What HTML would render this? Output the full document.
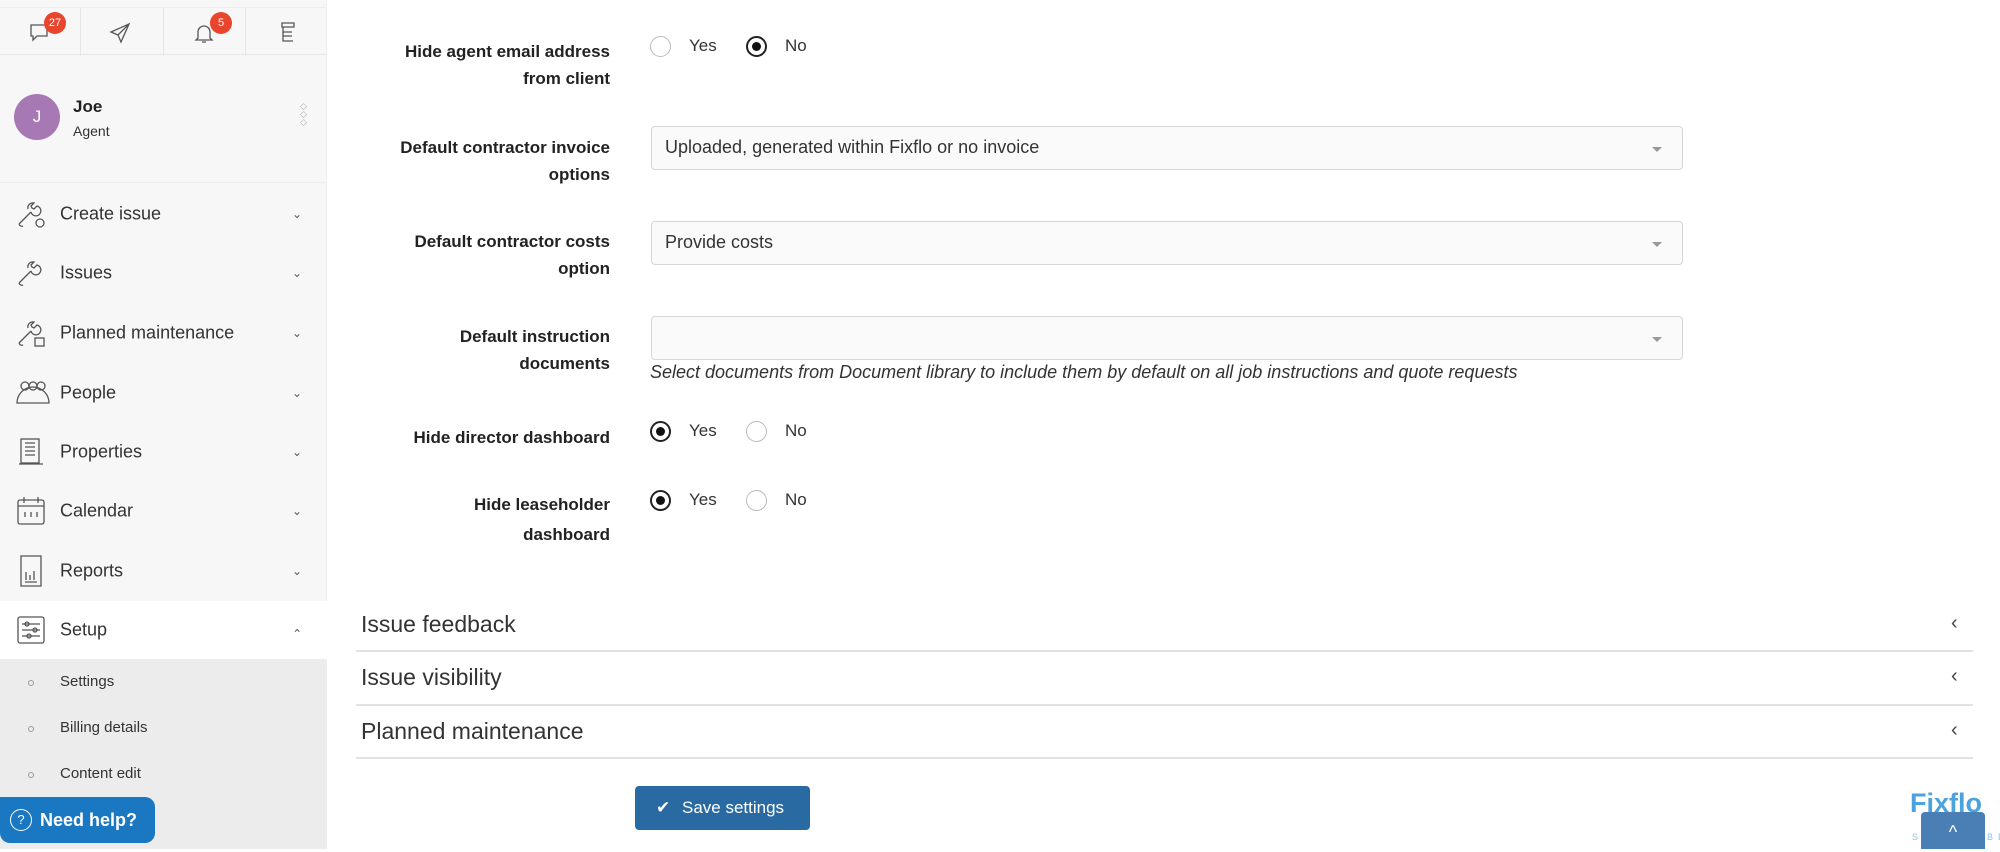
<!DOCTYPE html>
<html><head><meta charset="utf-8"><style>
*{box-sizing:border-box;margin:0;padding:0}
body{width:2000px;height:849px;overflow:hidden;background:#fff;font-family:"Liberation Sans",sans-serif;color:#222;position:relative}
.sb{position:absolute;left:0;top:0;width:327px;height:849px;background:#f7f7f7;border-right:1px solid #eee}
.topbar{position:absolute;left:0;top:7px;width:327px;height:48px;border-bottom:1px solid #e6e6e6;border-top:1px solid #eee}
.topbar .d{position:absolute;top:0;width:1px;height:48px;background:#e6e6e6}
.badge{position:absolute;background:#e8452c;color:#fff;border-radius:50%;width:22px;height:22px;font-size:11px;text-align:center;line-height:22px}
.av{position:absolute;left:14px;top:94px;width:46px;height:46px;border-radius:50%;background:#a679b5;color:#fff;text-align:center;line-height:46px;font-size:17px}
.mi{position:absolute;left:0;width:327px;height:58px}
.mi .t{position:absolute;left:60px;top:50%;transform:translateY(-50%);font-size:18px;color:#333}
.mi .c{position:absolute;left:292px;top:50%;transform:translateY(-50%);font-size:12px;color:#555}
.mi svg{position:absolute;left:15px;top:50%;transform:translateY(-50%)}
.sub{position:absolute;left:0;width:327px;font-size:15px;color:#333}
.sub span{position:absolute;left:60px}
.sub i{position:absolute;left:28px;top:7px;width:6px;height:6px;border:1px solid #999;border-radius:50%}
.lbl{position:absolute;right:1390px;text-align:right;font-weight:bold;font-size:17px;line-height:27px;color:#222}
.r{position:absolute;width:21px;height:21px;border:1px solid #bbb;border-radius:50%;background:#fff}
.r.on{border:2px solid #222}
.r.on::after{content:"";position:absolute;left:4px;top:4px;width:9px;height:9px;border-radius:50%;background:#111}
.rt{position:absolute;font-size:17px;color:#333}
.sel{position:absolute;left:651px;width:1032px;height:44px;border:1px solid #d6d6d6;border-radius:4px;background:#fafafa;font-size:18px;color:#333;padding:10px 13px}
.sel::after{content:"";position:absolute;right:20px;top:20px;border-left:5px solid transparent;border-right:5px solid transparent;border-top:5px solid #999}
.acc{position:absolute;left:361px;font-size:23px;color:#333}
.hl{position:absolute;left:356px;width:1617px;height:2px;background:#e2e2e2}
.chev{position:absolute;left:1951px;font-size:20px;color:#444}
</style></head><body>
<div class="sb">
 <div class="topbar">
  <div class="d" style="left:80px"></div><div class="d" style="left:163px"></div><div class="d" style="left:245px"></div>
  <svg style="position:absolute;left:28px;top:12px" width="24" height="24" viewBox="0 0 24 24" fill="none" stroke="#555" stroke-width="1.3"><path d="M3 5h16v11H9l-4 4v-4H3z"/></svg>
  <div class="badge" style="left:44px;top:4px">27</div>
  <svg style="position:absolute;left:108px;top:13px" width="24" height="24" viewBox="0 0 24 24" fill="none" stroke="#555" stroke-width="1.3"><path d="M21 3L3 11l7 3 3 7z M10 14l11-11"/></svg>
  <svg style="position:absolute;left:192px;top:13px" width="24" height="24" viewBox="0 0 24 24" fill="none" stroke="#555" stroke-width="1.3"><path d="M6 17V11a6 6 0 0 1 12 0v6l2 2H4z M10 21h4"/></svg>
  <div class="badge" style="left:210px;top:4px">5</div>
  <svg style="position:absolute;left:276px;top:12px" width="24" height="26" viewBox="0 0 24 26" fill="none" stroke="#555" stroke-width="1.3"><path d="M6 3h12v4H6z M7 7v14h10 M7 12h9 M7 16h9"/></svg>
 </div>
 <div class="av">J</div>
 <div style="position:absolute;left:73px;top:97px;font-weight:bold;font-size:17px">Joe</div>
 <div style="position:absolute;left:73px;top:123px;font-size:14px;color:#333">Agent</div>
 <div style="position:absolute;left:300px;top:102px;font-size:9px;color:#aaa;line-height:8px">◇<br>◇<br>◇</div>
 <div style="position:absolute;left:0;top:182px;width:327px;height:1px;background:#eee"></div>

 <div class="mi" style="top:185px"><svg width="32" height="32" viewBox="0 0 32 32" fill="none" stroke="#555" stroke-width="1.3"><path d="M4 26l12-12 M16 14a5 5 0 1 0 6-6l-3 3-2-1-1-2 3-3a5 5 0 0 0-6 6 M4 26a3 3 0 0 0 4 2"/><circle cx="25" cy="25" r="4"/></svg><span class="t">Create issue</span><span class="c">⌄</span></div>
 <div class="mi" style="top:244px"><svg width="32" height="32" viewBox="0 0 32 32" fill="none" stroke="#555" stroke-width="1.3"><path d="M4 26l12-12 M16 14a5 5 0 1 0 6-6l-3 3-2-1-1-2 3-3a5 5 0 0 0-6 6 M4 26a3 3 0 0 0 4 2"/></svg><span class="t">Issues</span><span class="c">⌄</span></div>
 <div class="mi" style="top:304px"><svg width="32" height="32" viewBox="0 0 32 32" fill="none" stroke="#555" stroke-width="1.3"><path d="M4 26l12-12 M16 14a5 5 0 1 0 6-6l-3 3-2-1-1-2 3-3a5 5 0 0 0-6 6 M4 26a3 3 0 0 0 4 2"/><rect x="20" y="21" width="9" height="8"/></svg><span class="t">Planned maintenance</span><span class="c">⌄</span></div>
 <div class="mi" style="top:364px"><svg width="36" height="28" viewBox="0 0 36 28" fill="none" stroke="#555" stroke-width="1.3"><circle cx="10" cy="7" r="4"/><circle cx="18" cy="7" r="4"/><circle cx="26" cy="7" r="4"/><path d="M2 24a8 8 0 0 1 32 0z"/></svg><span class="t">People</span><span class="c">⌄</span></div>
 <div class="mi" style="top:423px"><svg width="32" height="30" viewBox="0 0 32 30" fill="none" stroke="#555" stroke-width="1.3"><rect x="6" y="2" width="18" height="24"/><path d="M10 6h10M10 10h10M10 14h10M10 18h10 M4 27h24"/></svg><span class="t">Properties</span><span class="c">⌄</span></div>
 <div class="mi" style="top:482px"><svg width="32" height="32" viewBox="0 0 32 32" fill="none" stroke="#555" stroke-width="1.3"><rect x="3" y="5" width="26" height="24" rx="2"/><path d="M3 11h26 M9 2v6 M23 2v6 M10 17v5 M16 17v5 M22 17v5"/></svg><span class="t">Calendar</span><span class="c">⌄</span></div>
 <div class="mi" style="top:542px"><svg width="32" height="34" viewBox="0 0 32 34" fill="none" stroke="#555" stroke-width="1.3"><path d="M6 2h20v30H6z M10 28h12 M11 26v-8 M15 26v-5 M19 26v-9"/></svg><span class="t">Reports</span><span class="c">⌄</span></div>
 <div class="mi" style="top:601px;background:#fff"><svg width="32" height="32" viewBox="0 0 32 32" fill="none" stroke="#555" stroke-width="1.3"><rect x="3" y="3" width="26" height="26" rx="2"/><path d="M7 10h18 M7 16h18 M7 22h18"/><circle cx="12" cy="10" r="2"/><circle cx="20" cy="16" r="2"/><circle cx="14" cy="22" r="2"/></svg><span class="t">Setup</span><span class="c" style="transform:translateY(-30%) rotate(180deg)">⌄</span></div>
 <div style="position:absolute;left:0;top:659px;width:327px;height:190px;background:#ececec"></div>
 <div class="sub" style="top:673px"><i></i><span>Settings</span></div>
 <div class="sub" style="top:719px"><i></i><span>Billing details</span></div>
 <div class="sub" style="top:765px"><i></i><span>Content edit</span></div>
 <div style="position:absolute;left:0;top:797px;width:155px;height:46px;background:#1a78c2;border-radius:0 10px 10px 10px;color:#fff;font-weight:bold;font-size:18px;line-height:46px;padding-left:40px">Need help?</div>
 <div style="position:absolute;left:10px;top:809px;width:22px;height:22px;border:1.5px solid #fff;border-radius:50%;color:#fff;font-size:13px;text-align:center;line-height:19px">?</div>
</div>

<div class="lbl" style="top:38px">Hide agent email address<br>from client</div>
<div class="r" style="left:650px;top:36px"></div><div class="rt" style="left:689px;top:36px">Yes</div>
<div class="r on" style="left:746px;top:36px"></div><div class="rt" style="left:785px;top:36px">No</div>

<div class="lbl" style="top:134px">Default contractor invoice<br>options</div>
<div class="sel" style="top:126px">Uploaded, generated within Fixflo or no invoice</div>

<div class="lbl" style="top:228px">Default contractor costs<br>option</div>
<div class="sel" style="top:221px">Provide costs</div>

<div class="lbl" style="top:323px">Default instruction<br>documents</div>
<div class="sel" style="top:316px"></div>
<div style="position:absolute;left:650px;top:362px;font-style:italic;font-size:18px;color:#333">Select documents from Document library to include them by default on all job instructions and quote requests</div>

<div class="lbl" style="top:424px">Hide director dashboard</div>
<div class="r on" style="left:650px;top:421px"></div><div class="rt" style="left:689px;top:421px">Yes</div>
<div class="r" style="left:746px;top:421px"></div><div class="rt" style="left:785px;top:421px">No</div>

<div class="lbl" style="top:490px;line-height:30px">Hide leaseholder<br>dashboard</div>
<div class="r on" style="left:650px;top:490px"></div><div class="rt" style="left:689px;top:490px">Yes</div>
<div class="r" style="left:746px;top:490px"></div><div class="rt" style="left:785px;top:490px">No</div>

<div class="acc" style="top:611px">Issue feedback</div><div class="chev" style="top:612px">‹</div>
<div class="hl" style="top:650px"></div>
<div class="acc" style="top:664px">Issue visibility</div><div class="chev" style="top:665px">‹</div>
<div class="hl" style="top:704px"></div>
<div class="acc" style="top:718px">Planned maintenance</div><div class="chev" style="top:719px">‹</div>
<div class="hl" style="top:757px"></div>

<div style="position:absolute;left:635px;top:786px;width:175px;height:44px;background:#2a6aa3;border-radius:4px;color:#fff;font-size:17px;line-height:44px;padding-left:47px">Save settings</div>
<div style="position:absolute;left:656px;top:786px;color:#fff;font-size:17px;line-height:44px">✔</div>

<div style="position:absolute;left:1910px;top:788px;font-weight:bold;font-size:27px;color:#4aa3df">Fixflo</div>
<div style="position:absolute;left:1912px;top:832px;font-size:9px;letter-spacing:5px;color:#8cc3e8">SUBSCRIBE</div>
<div style="position:absolute;left:1921px;top:812px;width:64px;height:37px;background:#4a7fb5;border-radius:4px 4px 0 0;color:#fff;text-align:center;font-size:18px;line-height:40px">^</div>
</body></html>
